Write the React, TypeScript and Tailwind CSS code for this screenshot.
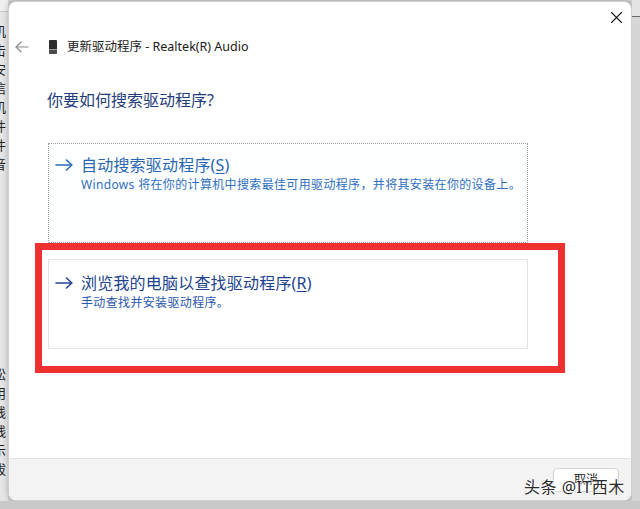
import React from "react";

const font = { fontFamily: '"Noto Sans", "Noto Sans CJK SC", sans-serif' };

function Arrow({ color }: { color: string }) {
  return (
    <svg width="18" height="12" viewBox="0 0 18 12" fill="none" stroke={color} strokeWidth="1.6" strokeLinecap="round" strokeLinejoin="round">
      <path d="M1 6 H16.5" />
      <path d="M11.5 1 L16.8 6 L11.5 11" />
    </svg>
  );
}

const leftTop = ["机", "击", "安", "信", "机", "件", "件", "音"];
const leftBottom = ["松", "用", "线", "线", "示", "拔"];

export default function App() {
  return (
    <div className="w-[640px] h-[509px] overflow-hidden bg-[#d2d2d2] flex flex-col relative" style={font}>
      <div className="flex h-[501px]">
        {/* left strip */}
        <div className="w-[8px] shrink-0 overflow-hidden bg-[#e6e6e6] flex flex-col text-[13px] text-[#222] leading-[20px]">
          <div className="h-[12px] bg-[#f0f0f0] border-b border-[#c8c8c8]" />
          <div className="flex flex-col mt-[10px] ml-[-7px]">
            {leftTop.map((c, i) => (
              <span key={i} className="h-[19px] leading-[19px]">{c}</span>
            ))}
          </div>
          <div className="flex-1" />
          <div className="flex flex-col mb-[22px] ml-[-7px]">
            {leftBottom.map((c, i) => (
              <span key={i} className="h-[19px] leading-[19px]">{c}</span>
            ))}
          </div>
        </div>

        {/* dialog */}
        <div className="w-[624px] h-[500px] mt-[1px] shrink-0 bg-white rounded-[8px] border border-[#cfcfcf] shadow-[0_0_6px_rgba(0,0,0,0.25)] flex flex-col overflow-hidden">
          <div className="h-[28px] flex justify-end items-center pr-[9px] pt-[2px]">
            <svg width="11" height="11" viewBox="0 0 11 11" stroke="#1b1b1b" strokeWidth="1.1" strokeLinecap="round">
              <path d="M0.5 0.5 L10.5 10.5 M10.5 0.5 L0.5 10.5" />
            </svg>
          </div>
          <div className="h-[34px] flex items-center pl-[6px]">
            <svg width="14" height="12" viewBox="0 0 14 12" fill="none" stroke="#8a8a8a" strokeWidth="1.1" strokeLinecap="round" strokeLinejoin="round">
              <path d="M13 6 H1.2" />
              <path d="M6.2 1 L1 6 L6.2 11" />
            </svg>
            <div className="ml-[20px] w-[8px] h-[14px] flex flex-col rounded-[1px] overflow-hidden">
              <div className="h-[9px] bg-[#2b2b2b]" />
              <div className="h-[1px] bg-[#9a9a9a]" />
              <div className="h-[4px] bg-[#4a4a4a]" />
            </div>
            <span className="ml-[10px] text-[12.5px] text-[#1a1a1a] leading-[16px]">更新驱动程序 - Realtek(R) Audio</span>
          </div>
          <div className="pl-[38px] mt-[25px] text-[16px] leading-[22px] text-[#1f3c7c]">你要如何搜索驱动程序?</div>

          <div className="ml-[39px] mt-[32px] w-[480px] h-[100px] border border-dotted border-[#9aa0a6] bg-[#fdfeff] pt-[10px] pl-[6px] flex">
            <div className="w-[26px] h-[22px] flex items-center">
              <Arrow color="#2a6cb8" />
            </div>
            <div className="flex flex-col">
              <span className="text-[16px] leading-[22px] text-[#2766b4] tracking-[0.2px]">
                自动搜索驱动程序(<span className="underline underline-offset-2">S</span>)
              </span>
              <span className="mt-[1px] text-[12px] leading-[16px] text-[#2f6fbf] tracking-[0.35px]">
                Windows 将在你的计算机中搜索最佳可用驱动程序，并将其安装在你的设备上。
              </span>
            </div>
          </div>

          <div className="ml-[26px] w-[530px] h-[130px] border-[7px] border-[#ee3030] pt-[9px] pl-[6px]">
            <div className="w-[480px] h-[90px] border border-[#e3e3e3] pt-[12px] pl-[6px] flex">
              <div className="w-[26px] h-[22px] flex items-center">
                <Arrow color="#23468f" />
              </div>
              <div className="flex flex-col">
                <span className="text-[16px] leading-[22px] text-[#21438e] tracking-[0.2px]">
                  浏览我的电脑以查找驱动程序(<span className="underline underline-offset-2">R</span>)
                </span>
                <span className="mt-[1px] text-[12px] leading-[16px] text-[#2a58ad] tracking-[0.35px]">手动查找并安装驱动程序。</span>
              </div>
            </div>
          </div>

          <div className="flex-1" />
          <div className="h-[42px] bg-[#f3f3f3] border-t border-[#e2e2e2] flex justify-end items-start pt-[9px] pr-[12px]">
            <div className="w-[66px] h-[24px] rounded-[4px] bg-white border border-[#d4d4d4] flex items-center justify-center text-[12px] text-[#1a1a1a]">
              取消
            </div>
          </div>
        </div>

        {/* right strip */}
        <div className="flex-1 bg-[#d6d6d6] flex flex-col">
          <div className="h-[17px] bg-[#e4e4e4] border-b border-[#6a6a6a]" />
        </div>
      </div>
      <div className="flex-1 bg-[#c9c9c9]" />

      {/* watermark overlay */}
      <div
        className="absolute left-[524px] top-[475px] text-[16px] leading-[24px] text-[#2a2a2a] whitespace-nowrap tracking-[0.5px]"
        style={{ textShadow: "0 0 2px #fff, 0 0 2px #fff, 0 0 3px #fff" }}
      >
        头条 @IT西木
      </div>
    </div>
  );
}
